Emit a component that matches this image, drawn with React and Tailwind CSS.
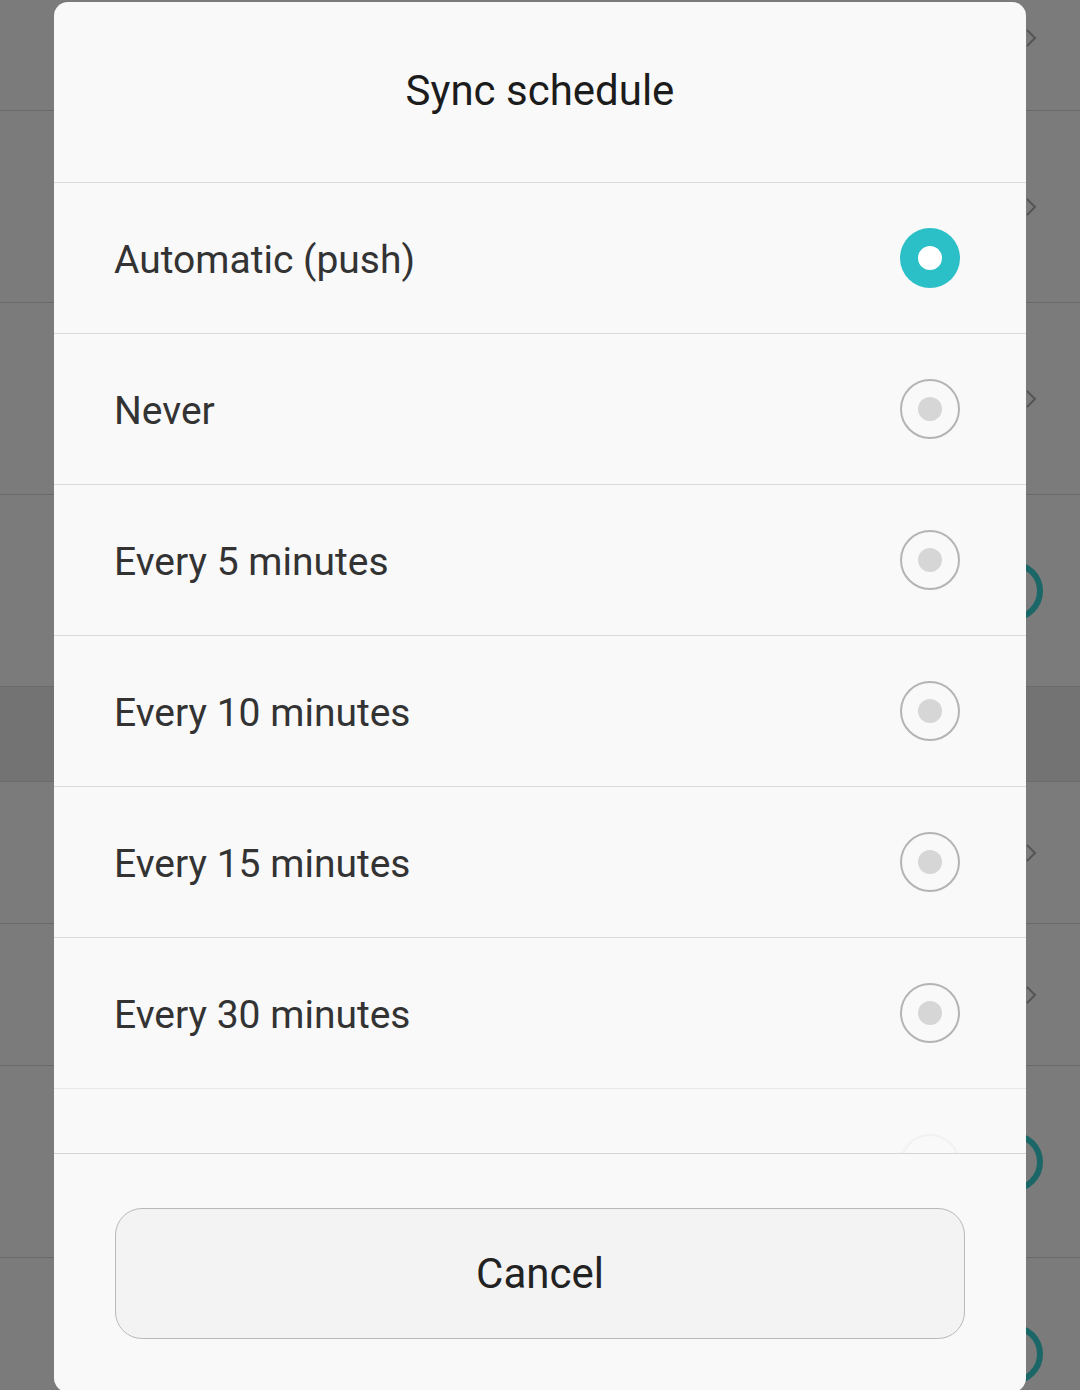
import React from "react";

function Chevron({ top }) {
  return (
    <svg
      width="14"
      height="22"
      viewBox="0 0 14 22"
      className={`absolute right-[42px] ${top ? "top-[27px]" : "top-1/2 -translate-y-1/2"}`}
    >
      <path d="M3 3 L11 11 L3 19" fill="none" stroke="#555" strokeWidth="2" />
    </svg>
  );
}

function TealRing() {
  return (
    <div className="absolute left-[983px] top-1/2 -translate-y-1/2 w-[60px] h-[60px] rounded-full border-[6px] border-[#1b6767]" />
  );
}

function BgRow({ h, dark, chevron, chevronTop, ring, last }) {
  return (
    <div
      className={`relative ${dark ? "bg-[#737373]" : "bg-[#7b7b7b]"} ${last ? "" : "border-b border-[#6a6a6a]"}`}
      style={{ height: h }}
    >
      {chevron && <Chevron top={chevronTop} />}
      {ring && <TealRing />}
    </div>
  );
}

function Radio({ selected }) {
  if (selected) {
    return (
      <div className="w-[60px] h-[60px] rounded-full bg-[#2bbfc7] flex items-center justify-center">
        <div className="w-[24px] h-[24px] rounded-full bg-white" />
      </div>
    );
  }
  return (
    <div className="w-[60px] h-[60px] rounded-full border-2 border-[#b4b4b4] flex items-center justify-center">
      <div className="w-[24px] h-[24px] rounded-full bg-[#d6d6d6]" />
    </div>
  );
}

const options = [
  "Automatic (push)",
  "Never",
  "Every 5 minutes",
  "Every 10 minutes",
  "Every 15 minutes",
  "Every 30 minutes",
];

export default function App() {
  return (
    <div
      className="relative w-[1080px] h-[1390px] overflow-hidden bg-[#7b7b7b]"
      style={{ fontFamily: "Roboto, 'Noto Sans', sans-serif" }}
    >
      {/* dimmed background list */}
      <div className="flex flex-col">
        <BgRow h={111} chevron chevronTop />
        <BgRow h={192} chevron />
        <BgRow h={192} chevron />
        <BgRow h={192} ring />
        <BgRow h={95} dark />
        <BgRow h={142} chevron />
        <BgRow h={142} chevron />
        <BgRow h={192} ring />
        <BgRow h={192} ring last />
      </div>

      {/* dialog */}
      <div className="absolute left-[54px] top-[2px] w-[972px] h-[1390px] rounded-[14px] bg-[#f9f9f9] flex flex-col overflow-hidden">
        <div className="h-[180px] flex items-center justify-center text-[42px] text-[#1c1c1c] pb-[4px]">
          Sync schedule
        </div>
        <div className="border-t border-[#dadada] flex flex-col">
          {options.map((o, i) => (
            <div
              key={o}
              className={`h-[151px] border-b ${i === options.length - 1 ? "border-[#e8e8e8]" : "border-[#dadada]"} flex items-center justify-between pl-[60px] pr-[66px]`}
            >
              <span className="text-[39px] text-[#333333] pt-[5px]">{o}</span>
              <Radio selected={i === 0} />
            </div>
          ))}
          <div className="h-[64px] overflow-hidden relative">
            <div className="h-[150px] flex items-center justify-end pr-[66px]">
              <div className="w-[60px] h-[60px] rounded-full border-2 border-[#f1f1f1]" />
            </div>
          </div>
        </div>
        <div className="border-t border-[#d5d5d5] pt-[54px] px-[61px]">
          <div className="h-[131px] rounded-[27px] border border-[#b9b9b9] bg-[#f3f3f3] flex items-center justify-center text-[42px] text-[#222222]">
            Cancel
          </div>
        </div>
      </div>
    </div>
  );
}
